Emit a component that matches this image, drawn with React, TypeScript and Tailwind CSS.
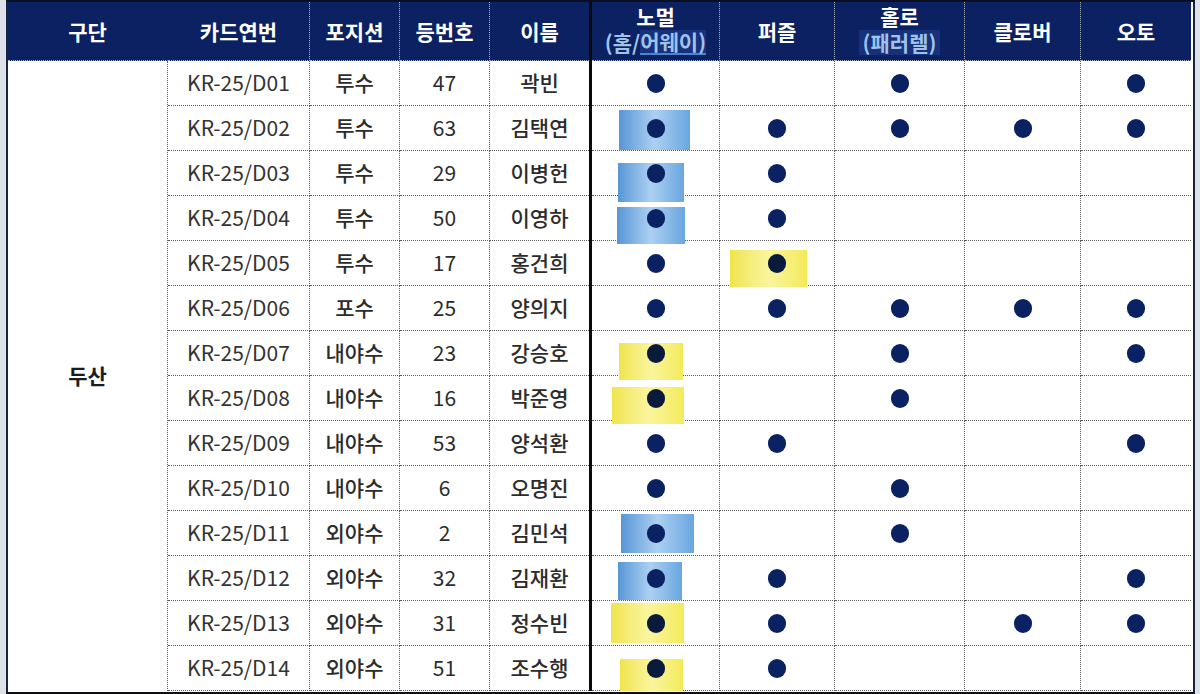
import React from 'react';

type Hl = { col: number; kind: 'blue' | 'yellow'; left: number; top: number; w: number; h: number };

type Row = {
  code: string;
  pos: string;
  num: string;
  name: string;
  marks: boolean[];
  hl?: Hl;
};

const rows: Row[] = [
  { code: 'KR-25/D01', pos: '투수', num: '47', name: '곽빈', marks: [true, false, true, false, true] },
  { code: 'KR-25/D02', pos: '투수', num: '63', name: '김택연', marks: [true, true, true, true, true], hl: { col: 0, kind: 'blue', left: 27, top: 4, w: 71, h: 40 } },
  { code: 'KR-25/D03', pos: '투수', num: '29', name: '이병헌', marks: [true, true, false, false, false], hl: { col: 0, kind: 'blue', left: 26, top: 12, w: 66, h: 39 } },
  { code: 'KR-25/D04', pos: '투수', num: '50', name: '이영하', marks: [true, true, false, false, false], hl: { col: 0, kind: 'blue', left: 25, top: 11, w: 68, h: 37 } },
  { code: 'KR-25/D05', pos: '투수', num: '17', name: '홍건희', marks: [true, true, false, false, false], hl: { col: 1, kind: 'yellow', left: 10, top: 9, w: 77, h: 37 } },
  { code: 'KR-25/D06', pos: '포수', num: '25', name: '양의지', marks: [true, true, true, true, true] },
  { code: 'KR-25/D07', pos: '내야수', num: '23', name: '강승호', marks: [true, false, true, false, true], hl: { col: 0, kind: 'yellow', left: 27, top: 12, w: 64, h: 37 } },
  { code: 'KR-25/D08', pos: '내야수', num: '16', name: '박준영', marks: [true, false, true, false, false], hl: { col: 0, kind: 'yellow', left: 20, top: 11, w: 72, h: 37 } },
  { code: 'KR-25/D09', pos: '내야수', num: '53', name: '양석환', marks: [true, true, false, false, true] },
  { code: 'KR-25/D10', pos: '내야수', num: '6', name: '오명진', marks: [true, false, true, false, false] },
  { code: 'KR-25/D11', pos: '외야수', num: '2', name: '김민석', marks: [true, false, true, false, false], hl: { col: 0, kind: 'blue', left: 29, top: 3, w: 73, h: 39 } },
  { code: 'KR-25/D12', pos: '외야수', num: '32', name: '김재환', marks: [true, true, false, false, true], hl: { col: 0, kind: 'blue', left: 26, top: 6, w: 64, h: 38 } },
  { code: 'KR-25/D13', pos: '외야수', num: '31', name: '정수빈', marks: [true, true, false, true, true], hl: { col: 0, kind: 'yellow', left: 19, top: 2, w: 73, h: 40 } },
  { code: 'KR-25/D14', pos: '외야수', num: '51', name: '조수행', marks: [true, true, false, false, false], hl: { col: 0, kind: 'yellow', left: 28, top: 13, w: 63, h: 32 } },
];

const font = { fontFamily: '"Noto Sans CJK KR", "Noto Sans", sans-serif' };

const cell = 'flex items-center justify-center border-b border-r border-dotted border-[#5a5a5a]';
const head = 'flex flex-col items-center justify-center border-b border-dotted border-[#aeb6c8] bg-[#0b2161] text-white font-bold leading-[25px]';

const Dot = ({ dark }: { dark?: boolean }) => (
  <div className={dark ? 'relative h-[19px] w-[18px] rounded-full bg-[#0a1a3c]' : 'relative h-[19px] w-[18px] rounded-full bg-[#0b2262]'} />
);

const Highlight = ({ hl }: { hl: Hl }) => (
  <div
    className={
      hl.kind === 'blue'
        ? 'absolute bg-linear-to-r from-[#5796d6] via-[#acd0f1] to-[#69a6e0]'
        : 'absolute bg-linear-to-r from-[#f0e44a] via-[#faf59c] to-[#f3ea58]'
    }
    style={{ left: hl.left, top: hl.top, width: hl.w, height: hl.h }}
  />
);

export default function App() {
  return (
    <div className="flex h-[694px] w-[1200px] bg-[#dde1e8] pl-[6px]" style={font}>
      <div className="h-[694px] w-[1189px] border-x-2 border-b-2 border-t-2 border-x-[#17223f] border-b-[#0d0d12] border-t-[#0a0f24] bg-white">
        <div className="grid grid-cols-[160px_142px_90px_90px_99px_3px_128px_115px_130px_116px_110px] grid-rows-[59px_repeat(14,45px)] text-[21px] text-[#2c2c2c]">
          {/* header */}
          <div className={`${head} border-r border-r-transparent`}>구단</div>
          <div className={`${head} border-r border-r-[#aeb6c8]`}>카드연번</div>
          <div className={`${head} border-r border-r-[#aeb6c8]`}>포지션</div>
          <div className={`${head} border-r border-r-[#aeb6c8]`}>등번호</div>
          <div className={head}>이름</div>
          <div className="row-span-15 bg-[#0a0a0a]" />
          <div className={`${head} border-r border-r-[#aeb6c8]`}>
            <span className="-mt-1 block h-[24px] leading-[24px]">노멀</span>
            <span className="mt-[2px] flex h-[25px] items-center text-[21px] leading-[23px] text-[#9fc3ea]">
              <span>(홈/</span>
              <span className="block h-[25px] border-b-2 border-[#4a86d0] bg-[#17317a] leading-[23px]">어웨이)</span>
            </span>
          </div>
          <div className={`${head} border-r border-r-[#aeb6c8]`}>퍼즐</div>
          <div className={`${head} border-r border-r-[#aeb6c8]`}>
            <span className="-mt-1 block h-[24px] leading-[24px]">홀로</span>
            <span className="mt-[2px] block h-[25px] bg-[#17317a] px-1 text-[21px] leading-[25px] text-[#9fc3ea]">(패러렐)</span>
          </div>
          <div className={`${head} border-r border-r-[#aeb6c8]`}>클로버</div>
          <div className={head}>오토</div>

          {rows.map((r, i) => (
            <React.Fragment key={r.code}>
              {i === 0 && (
                <div className="row-span-14 flex items-center justify-center border-r border-dotted border-[#5a5a5a] font-bold text-[#1c1c1c]">
                  두산
                </div>
              )}
              <div className={`${cell} text-[#333]`}>{r.code}</div>
              <div className={`${cell} font-medium`}>{r.pos}</div>
              <div className={cell}>{r.num}</div>
              <div className={`${cell} border-r-0 font-medium`}>{r.name}</div>
              {r.marks.map((m, c) => (
                <div key={c} className={`${cell} relative ${c === 4 ? 'border-r-0' : ''}`}>
                  {r.hl && r.hl.col === c && <Highlight hl={r.hl} />}
                  {m && <Dot dark={!!r.hl && r.hl.col === c && r.hl.kind === 'yellow'} />}
                </div>
              ))}
            </React.Fragment>
          ))}
        </div>
      </div>
    </div>
  );
}
